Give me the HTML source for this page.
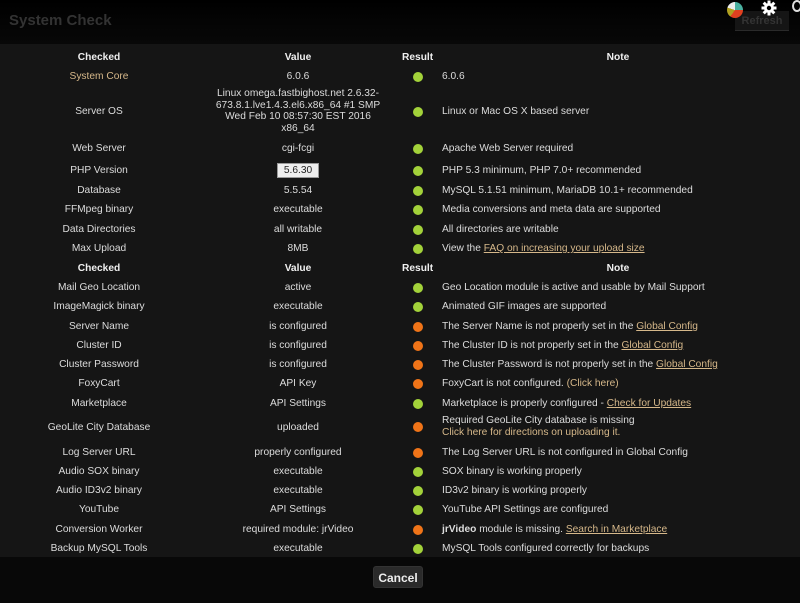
<!DOCTYPE html>
<html><head><meta charset="utf-8"><style>
*{margin:0;padding:0;box-sizing:border-box}
body{width:800px;height:603px;overflow:hidden;background:#151515;font-family:"Liberation Sans",sans-serif;font-size:10.2px;color:#dcdcdc;position:relative}
.top{position:absolute;left:0;top:0;width:800px;height:44px;background:linear-gradient(#000,#080808)}
.title{position:absolute;left:9px;top:12px;font-size:15px;font-weight:bold;color:#333}
.refresh{position:absolute;left:735px;top:11px;width:54px;height:20px;background:#151515;color:#333;font-weight:bold;font-size:11px;text-align:center;line-height:20px;border-bottom:1px solid #2a2a2a}
.tbl{position:absolute;left:0;top:44px;width:800px;height:513px;background:#151515}
.bot{position:absolute;left:0;top:557px;width:800px;height:46px;background:#080808}
.btn{position:absolute;left:373px;top:566px;width:50px;height:22px;background:#2a2a2a;border-radius:3px;color:#eee;font-weight:bold;font-size:12px;text-align:center;line-height:22px;border:1px solid #333}
.r{position:absolute;left:0;width:800px;height:19px;line-height:19px}
.c1{position:absolute;left:0;width:198px;text-align:center}
.c2{position:absolute;left:200px;width:196px;text-align:center}
.c3{position:absolute;left:413px;top:5px;width:10px;height:10px;border-radius:50%;background:#a3d23a}
.o{background:#f07418}
.c4{position:absolute;left:442px;white-space:nowrap}
.h{font-weight:bold;color:#f0f0f0}
.hr{position:absolute;left:402px;font-weight:bold}
.hn{position:absolute;left:420px;width:396px;text-align:center;font-weight:bold}
a{color:#d6b88a;text-decoration:underline}
.t{color:#d6b88a}
.pv{display:inline-block;background:#eee;color:#222;line-height:13px;padding:0 6px;border:1px solid #999}
</style></head><body>
<div class="top"></div>
<div class="title">System Check</div>
<div class="refresh">Refresh</div>
<div style="position:absolute;left:727px;top:2px;width:16px;height:16px;border-radius:50%;background:conic-gradient(#4ab0a0 0 25%,#e04020 25% 60%,#b0a020 60% 80%,#eee 80%)"></div>
<svg style="position:absolute;left:761px;top:0" width="16" height="16" viewBox="0 0 16 16"><g fill="#fff"><circle cx="8" cy="8" r="5"/><rect x="6.5" y="0.5" width="3" height="15"/><rect x="0.5" y="6.5" width="15" height="3"/><rect x="6.5" y="0.5" width="3" height="15" transform="rotate(45 8 8)"/><rect x="6.5" y="0.5" width="3" height="15" transform="rotate(-45 8 8)"/></g><circle cx="8" cy="8" r="2.2" fill="#000"/></svg>
<div style="position:absolute;left:792px;top:0;width:10px;height:12px;border:2px solid #ddd;border-radius:50%"></div>
<div class="tbl"></div>
<div class="bot"></div>
<div class="btn">Cancel</div>

<div class="r h" style="top:48px"><span class="c1">Checked</span><span class="c2">Value</span><span class="hr">Result</span><span class="hn">Note</span></div>
<div class="r" style="top:67px"><span class="c1 t">System Core</span><span class="c2">6.0.6</span><i class="c3"></i><span class="c4">6.0.6</span></div>
<div class="r" style="top:88px;height:44px"><span class="c1" style="top:14px">Server OS</span><span class="c2" style="line-height:11.5px;top:0;left:214px;width:168px">Linux omega.fastbighost.net 2.6.32-673.8.1.lve1.4.3.el6.x86_64 #1 SMP Wed Feb 10 08:57:30 EST 2016 x86_64</span><i class="c3" style="top:19px"></i><span class="c4" style="top:14px">Linux or Mac OS X based server</span></div>
<div class="r" style="top:139px"><span class="c1">Web Server</span><span class="c2">cgi-fcgi</span><i class="c3"></i><span class="c4">Apache Web Server required</span></div>
<div class="r" style="top:161px"><span class="c1">PHP Version</span><span class="c2"><span class="pv">5.6.30</span></span><i class="c3"></i><span class="c4">PHP 5.3 minimum, PHP 7.0+ recommended</span></div>
<div class="r" style="top:181px"><span class="c1">Database</span><span class="c2">5.5.54</span><i class="c3"></i><span class="c4">MySQL 5.1.51 minimum, MariaDB 10.1+ recommended</span></div>
<div class="r" style="top:200px"><span class="c1">FFMpeg binary</span><span class="c2">executable</span><i class="c3"></i><span class="c4">Media conversions and meta data are supported</span></div>
<div class="r" style="top:220px"><span class="c1">Data Directories</span><span class="c2">all writable</span><i class="c3"></i><span class="c4">All directories are writable</span></div>
<div class="r" style="top:239px"><span class="c1">Max Upload</span><span class="c2">8MB</span><i class="c3"></i><span class="c4">View the <a>FAQ on increasing your upload size</a></span></div>
<div class="r h" style="top:259px"><span class="c1">Checked</span><span class="c2">Value</span><span class="hr">Result</span><span class="hn">Note</span></div>
<div class="r" style="top:278px"><span class="c1">Mail Geo Location</span><span class="c2">active</span><i class="c3"></i><span class="c4">Geo Location module is active and usable by Mail Support</span></div>
<div class="r" style="top:297px"><span class="c1">ImageMagick binary</span><span class="c2">executable</span><i class="c3"></i><span class="c4">Animated GIF images are supported</span></div>
<div class="r" style="top:317px"><span class="c1">Server Name</span><span class="c2">is configured</span><i class="c3 o"></i><span class="c4">The Server Name is not properly set in the <a>Global Config</a></span></div>
<div class="r" style="top:336px"><span class="c1">Cluster ID</span><span class="c2">is configured</span><i class="c3 o"></i><span class="c4">The Cluster ID is not properly set in the <a>Global Config</a></span></div>
<div class="r" style="top:355px"><span class="c1">Cluster Password</span><span class="c2">is configured</span><i class="c3 o"></i><span class="c4">The Cluster Password is not properly set in the <a>Global Config</a></span></div>
<div class="r" style="top:374px"><span class="c1">FoxyCart</span><span class="c2">API Key</span><i class="c3 o"></i><span class="c4">FoxyCart is not configured. <span class="t">(Click here)</span></span></div>
<div class="r" style="top:394px"><span class="c1">Marketplace</span><span class="c2">API Settings</span><i class="c3"></i><span class="c4">Marketplace is properly configured - <a>Check for Updates</a></span></div>
<div class="r" style="top:413px;height:28px"><span class="c1" style="top:5px">GeoLite City Database</span><span class="c2" style="top:5px">uploaded</span><i class="c3 o" style="top:9px"></i><span class="c4" style="line-height:12px;top:2px">Required GeoLite City database is missing<br><span class="t">Click here for directions on uploading it.</span></span></div>
<div class="r" style="top:443px"><span class="c1">Log Server URL</span><span class="c2">properly configured</span><i class="c3 o"></i><span class="c4">The Log Server URL is not configured in Global Config</span></div>
<div class="r" style="top:462px"><span class="c1">Audio SOX binary</span><span class="c2">executable</span><i class="c3"></i><span class="c4">SOX binary is working properly</span></div>
<div class="r" style="top:481px"><span class="c1">Audio ID3v2 binary</span><span class="c2">executable</span><i class="c3"></i><span class="c4">ID3v2 binary is working properly</span></div>
<div class="r" style="top:500px"><span class="c1">YouTube</span><span class="c2">API Settings</span><i class="c3"></i><span class="c4">YouTube API Settings are configured</span></div>
<div class="r" style="top:520px"><span class="c1">Conversion Worker</span><span class="c2">required module: jrVideo</span><i class="c3 o"></i><span class="c4"><b>jrVideo</b> module is missing. <a>Search in Marketplace</a></span></div>
<div class="r" style="top:539px"><span class="c1">Backup MySQL Tools</span><span class="c2">executable</span><i class="c3"></i><span class="c4">MySQL Tools configured correctly for backups</span></div>
</body></html>
